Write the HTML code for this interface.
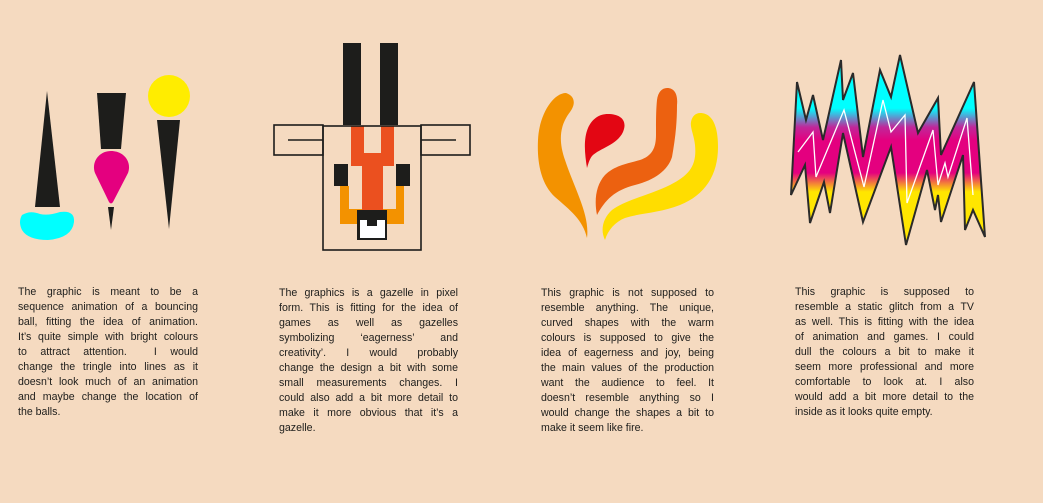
<!DOCTYPE html>
<html><head><meta charset="utf-8">
<style>
html,body{margin:0;padding:0}
body{width:1043px;height:503px;background:#f5dac0;position:relative;overflow:hidden;font-family:"Liberation Sans",sans-serif;color:#1d1d1b}
svg{position:absolute;left:0;top:0}
.col{position:absolute;font-size:10.6px;line-height:15px}
.col div{text-align:justify;text-align-last:justify;white-space:nowrap;height:15px}
.col div.l{text-align-last:left}
</style></head><body>
<svg width="1043" height="503" viewBox="0 0 1043 503">
<defs>
<linearGradient id="g" x1="0" y1="55" x2="0" y2="245" gradientUnits="userSpaceOnUse">
<stop offset="0" stop-color="#00ffff"/>
<stop offset="0.28" stop-color="#00ffff"/>
<stop offset="0.38" stop-color="#c0279a"/>
<stop offset="0.45" stop-color="#e4007f"/>
<stop offset="0.62" stop-color="#e4007f"/>
<stop offset="0.72" stop-color="#ffe600"/>
<stop offset="1" stop-color="#ffe600"/>
</linearGradient>
</defs>
<!-- balls -->
<polygon points="47,91 60,207 35,207" fill="#1d1d1b"/>
<path d="M22,215 Q30,210 40,214 Q48,216 60,212 Q75,210 74,222 Q72,238 48,240 Q28,240 22,230 Q18,222 22,215Z" fill="#00ffff"/>
<polygon points="97,93 126,93 121,149 101,149" fill="#1d1d1b"/>
<path d="M111,151 C124,151 132,162 128,173 L113,202 Q111,205 109,202 L95,173 C91,162 99,151 111,151Z" fill="#e4007f"/>
<polygon points="108,207 114,207 111,230" fill="#1d1d1b"/>
<circle cx="169" cy="96" r="21" fill="#ffed00"/>
<polygon points="157,120 180,120 169,229" fill="#1d1d1b"/>
<!-- gazelle -->
<rect x="343" y="43" width="18" height="82" fill="#1d1d1b"/>
<rect x="380" y="43" width="18" height="82" fill="#1d1d1b"/>
<path d="M351,126 H364 V153 H381 V126 H394 V166 H383 V210 H362 V166 H351Z" fill="#eb501f"/>
<rect x="334" y="164" width="14" height="22" fill="#1d1d1b"/>
<rect x="396" y="164" width="14" height="22" fill="#1d1d1b"/>
<path d="M340,186 H349 V209 H362 V224 H340Z" fill="#f39200"/>
<path d="M396,186 H404 V224 H383 V209 H396Z" fill="#f39200"/>
<rect x="357" y="210" width="30" height="30" fill="#1d1d1b"/>
<rect x="360" y="220" width="25" height="18" fill="#fff"/>
<rect x="367" y="219" width="10" height="7" fill="#1d1d1b"/>
<g fill="none" stroke="#1d1d1b" stroke-width="1.6">
<rect x="323" y="126" width="98" height="124"/>
<rect x="274" y="125" width="49" height="30"/>
<rect x="421" y="125" width="49" height="30"/>
<line x1="288" y1="140" x2="323" y2="140"/>
<line x1="421" y1="140" x2="456" y2="140"/>
</g>
<!-- fire -->
<path d="M566,93 C575,96 576,104 570,112 C560,125 558,140 565,160 C575,190 590,215 587,238 C583,220 570,210 555,197 C540,183 537,160 538,140 C539,115 553,93 566,93Z" fill="#f39200"/>
<path d="M608,114 C620,114 628,120 623,132 C617,145 600,148 592,156 C589,160 588,165 587,168 C585,155 583,140 588,128 C592,119 599,114 608,114Z" fill="#e30613"/>
<path d="M667,88 C675,88 678,95 677,105 C677,125 675,140 672,157 C668,170 655,180 635,185 C615,190 605,200 597,215 C594,200 596,185 605,175 C615,165 630,163 640,160 C652,156 656,148 656,135 C656,120 656,110 657,100 C658,92 662,88 667,88Z" fill="#ec6110"/>
<path d="M700,113 C712,113 718,125 718,147 C718,175 705,195 680,205 C660,213 640,213 625,218 C615,222 608,230 605,240 C600,230 603,218 612,210 C625,200 650,195 670,185 C690,175 697,165 695,145 C694,135 690,128 691,122 C692,116 696,113 700,113Z" fill="#ffdd00"/>
<!-- glitch -->
<polygon points="797,82 806,120 813,95 823,140 841,60 843,100 853,73 863,157 880,70 891,97 900,55 918,133 938,98 941,155 974,82 985,237 973,210 965,230 963,155 941,222 938,195 935,210 927,170 906,245 891,147 863,222 843,133 830,213 824,182 810,223 805,165 791,195" fill="url(#g)" stroke="#2a2a2a" stroke-width="2" stroke-linejoin="miter"/>
<polyline points="798,152 813,132 816,177 844,110 864,187 883,100 891,132 905,115 907,203 933,130 938,185 945,163 948,177 967,118 973,195" fill="none" stroke="#fff" stroke-width="1.3"/>
</svg>

<div class="col" style="left:18px;top:285px;width:180px">
<div>The graphic is meant to be a</div>
<div>sequence animation of a bouncing</div>
<div>ball, fitting the idea of animation.</div>
<div>It’s quite simple with bright colours</div>
<div>to attract attention.&nbsp; I would</div>
<div>change the tringle into lines as it</div>
<div>doesn’t look much of an animation</div>
<div>and maybe change the location of</div>
<div class="l">the balls.</div>
</div>

<div class="col" style="left:279px;top:286px;width:179px">
<div>The graphics is a gazelle in pixel</div>
<div>form. This is fitting for the idea of</div>
<div>games as well as gazelles</div>
<div>symbolizing ‘eagerness’ and</div>
<div>creativity’. I would probably</div>
<div>change the design a bit with some</div>
<div>small measurements changes. I</div>
<div>could also add a bit more detail to</div>
<div>make it more obvious that it’s a</div>
<div class="l">gazelle.</div>
</div>

<div class="col" style="left:541px;top:286px;width:173px">
<div>This graphic is not supposed to</div>
<div>resemble anything. The unique,</div>
<div>curved shapes with the warm</div>
<div>colours is supposed to give the</div>
<div>idea of eagerness and joy, being</div>
<div>the main values of the production</div>
<div>want the audience to feel. It</div>
<div>doesn’t resemble anything so I</div>
<div>would change the shapes a bit to</div>
<div class="l">make it seem like fire.</div>
</div>

<div class="col" style="left:795px;top:285px;width:179px">
<div>This graphic is supposed to</div>
<div>resemble a static glitch from a TV</div>
<div>as well. This is fitting with the idea</div>
<div>of animation and games. I could</div>
<div>dull the colours a bit to make it</div>
<div>seem more professional and more</div>
<div>comfortable to look at. I also</div>
<div>would add a bit more detail to the</div>
<div class="l">inside as it looks quite empty.</div>
</div>
</body></html>
